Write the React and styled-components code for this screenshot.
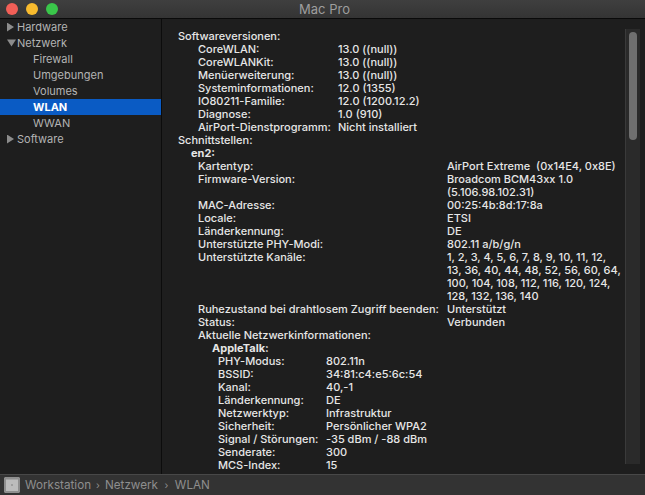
import React from "react";
import styled, { createGlobalStyle } from "styled-components";

const GlobalStyle = createGlobalStyle`
  html, body {
    margin: 0;
    height: 100%;
    background: #1e1e1e;
  }
  #root {
    height: 100%;
  }
`;

const Window = styled.div`
  width: 645px;
  height: 495px;
  display: flex;
  flex-direction: column;
  overflow: hidden;
  background: #1e1e1e;
  font-family: Inter, "Liberation Sans", sans-serif;
  font-size: 11px;
  color: #e6e6e6;
`;

const TitleBar = styled.div`
  flex: 0 0 18px;
  display: flex;
  align-items: center;
  position: relative;
  padding-left: 6px;
  gap: 8px;
  background: linear-gradient(#3f3f3f, #343434);
  border-bottom: 1px solid #0a0a0a;
`;

const Light = styled.span`
  width: 12px;
  height: 12px;
  border-radius: 50%;
  background: ${(p) => p.$color};
`;

const Title = styled.div`
  position: absolute;
  inset: 0 0 0 4px;
  display: flex;
  align-items: center;
  justify-content: center;
  font-size: 13px;
  color: #9e9e9e;
`;

const Main = styled.div`
  flex: 1;
  min-height: 0;
  display: flex;
`;

const Sidebar = styled.div`
  flex: 0 0 161px;
  background: #1e1e1e;
  border-right: 1px solid #0c0c0c;
`;

const TreeRow = styled.div`
  height: 16px;
  display: flex;
  align-items: center;
  gap: 3px;
  padding-left: ${(p) => p.$indent}px;
  color: ${(p) => (p.$selected ? "#fff" : "#b4b4b4")};
  font-weight: ${(p) => (p.$selected ? 700 : 400)};
  background: ${(p) => (p.$selected ? "#0a5bc4" : "transparent")};
`;

const Arrow = styled.span`
  width: 7px;
  height: 9px;
  background: #8c8c8c;
  clip-path: ${(p) =>
    p.$open
      ? "polygon(0 10%, 100% 10%, 50% 90%)"
      : "polygon(0 0, 100% 50%, 0 100%)"};
  ${(p) => p.$open && "width: 9px; margin-right: -2px;"}
`;

const Content = styled.div`
  flex: 1;
  min-width: 0;
  position: relative;
  overflow: hidden;
  padding: 11px 0 0 16px;
`;

const Heading = styled.div`
  height: 13px;
  line-height: 13px;
  padding-left: ${(p) => p.$indent || 0}px;
  font-weight: ${(p) => (p.$bold ? 700 : 500)};
  white-space: nowrap;
`;

const Row = styled.div`
  display: grid;
  grid-template-columns: ${(p) => p.$label}px auto;
  justify-content: start;
  padding-left: ${(p) => p.$indent}px;
  line-height: 13px;
  font-weight: 500;
  white-space: nowrap;
`;

const Value = styled.span`
  white-space: pre;
`;

const ScrollTrack = styled.div`
  position: absolute;
  top: 10px;
  right: 5px;
  bottom: 10px;
  width: 14px;
  background: #2a2a2a;
  border-left: 1px solid #3a3a3a;
`;

const ScrollThumb = styled.div`
  position: absolute;
  top: 3px;
  left: 3px;
  width: 8px;
  height: 108px;
  border-radius: 4px;
  background: #6f6f6f;
`;

const StatusBar = styled.div`
  flex: 0 0 20px;
  display: flex;
  align-items: center;
  gap: 5px;
  padding-left: 4px;
  background: #333;
  border-top: 1px solid #484848;
  color: #8e8e8e;
  font-size: 11.7px;
`;

const Crumb = styled.span`
  display: flex;
  align-items: center;
  gap: 5px;
`;

const Sep = styled.span`
  font-size: 10px;
  margin-left: ${(p) => p.$extra || 0}px;
  margin-right: ${(p) => p.$extra || 0}px;
`;

const MacIcon = () => (
  <svg width="16" height="16" viewBox="0 0 16 16">
    <path d="M1 0h14l1 1v14l-1 1H1l-1-1V1z" fill="#8f8f8f" />
    <rect x="2" y="2.5" width="12" height="11.5" fill="#bcbcbc" />
    <circle cx="8" cy="8" r="1" fill="#949494" />
  </svg>
);

const tree = [
  { label: "Hardware", arrow: "closed", indent: 7 },
  { label: "Netzwerk", arrow: "open", indent: 7 },
  { label: "Firewall", indent: 33 },
  { label: "Umgebungen", indent: 33 },
  { label: "Volumes", indent: 33 },
  { label: "WLAN", indent: 33, selected: true },
  { label: "WWAN", indent: 33 },
  { label: "Software", arrow: "closed", indent: 7 },
];

const versions = [
  ["CoreWLAN:", "13.0 ((null))"],
  ["CoreWLANKit:", "13.0 ((null))"],
  ["Menüerweiterung:", "13.0 ((null))"],
  ["Systeminformationen:", "12.0 (1355)"],
  ["IO80211-Familie:", "12.0 (1200.12.2)"],
  ["Diagnose:", "1.0 (910)"],
  ["AirPort-Dienstprogramm:", "Nicht installiert"],
];

const interfaceInfo = [
  ["Kartentyp:", "AirPort Extreme  (0x14E4, 0x8E)"],
  ["Firmware-Version:", "Broadcom BCM43xx 1.0\n(5.106.98.102.31)"],
  ["MAC-Adresse:", "00:25:4b:8d:17:8a"],
  ["Locale:", "ETSI"],
  ["Länderkennung:", "DE"],
  ["Unterstützte PHY-Modi:", "802.11 a/b/g/n"],
  [
    "Unterstützte Kanäle:",
    "1, 2, 3, 4, 5, 6, 7, 8, 9, 10, 11, 12,\n13, 36, 40, 44, 48, 52, 56, 60, 64,\n100, 104, 108, 112, 116, 120, 124,\n128, 132, 136, 140",
  ],
  ["Ruhezustand bei drahtlosem Zugriff beenden:", "Unterstützt"],
  ["Status:", "Verbunden"],
];

const network = [
  ["PHY-Modus:", "802.11n"],
  ["BSSID:", "34:81:c4:e5:6c:54"],
  ["Kanal:", "40,-1"],
  ["Länderkennung:", "DE"],
  ["Netzwerktyp:", "Infrastruktur"],
  ["Sicherheit:", "Persönlicher WPA2"],
  ["Signal / Störungen:", "-35 dBm / -88 dBm"],
  ["Senderate:", "300"],
  ["MCS-Index:", "15"],
];

const renderRows = (rows, indent, label) =>
  rows.map(([name, value]) => (
    <Row key={name} $indent={indent} $label={label}>
      <span>{name}</span>
      <Value>{value}</Value>
    </Row>
  ));

export default function App() {
  return (
    <Window>
      <GlobalStyle />
      <TitleBar>
        <Title>Mac Pro</Title>
        <Light $color="#f25f57" />
        <Light $color="#f8bb2e" />
        <Light $color="#3ac64a" />
      </TitleBar>
      <Main>
        <Sidebar>
          {tree.map((item) => (
            <TreeRow key={item.label} $indent={item.indent} $selected={item.selected}>
              {item.arrow && <Arrow $open={item.arrow === "open"} />}
              {item.label}
            </TreeRow>
          ))}
        </Sidebar>
        <Content>
          <Heading>Softwareversionen:</Heading>
          {renderRows(versions, 20, 140)}
          <Heading>Schnittstellen:</Heading>
          <Heading $indent={13} $bold>
            en2:
          </Heading>
          {renderRows(interfaceInfo, 20, 249)}
          <Heading $indent={20}>Aktuelle Netzwerkinformationen:</Heading>
          <Heading $indent={34} $bold>
            AppleTalk:
          </Heading>
          {renderRows(network, 40, 108)}
          <ScrollTrack>
            <ScrollThumb />
          </ScrollTrack>
        </Content>
      </Main>
      <StatusBar>
        <MacIcon />
        <Crumb>
          Workstation <Sep>›</Sep> Netzwerk <Sep $extra={1.5}>›</Sep> WLAN
        </Crumb>
      </StatusBar>
    </Window>
  );
}
